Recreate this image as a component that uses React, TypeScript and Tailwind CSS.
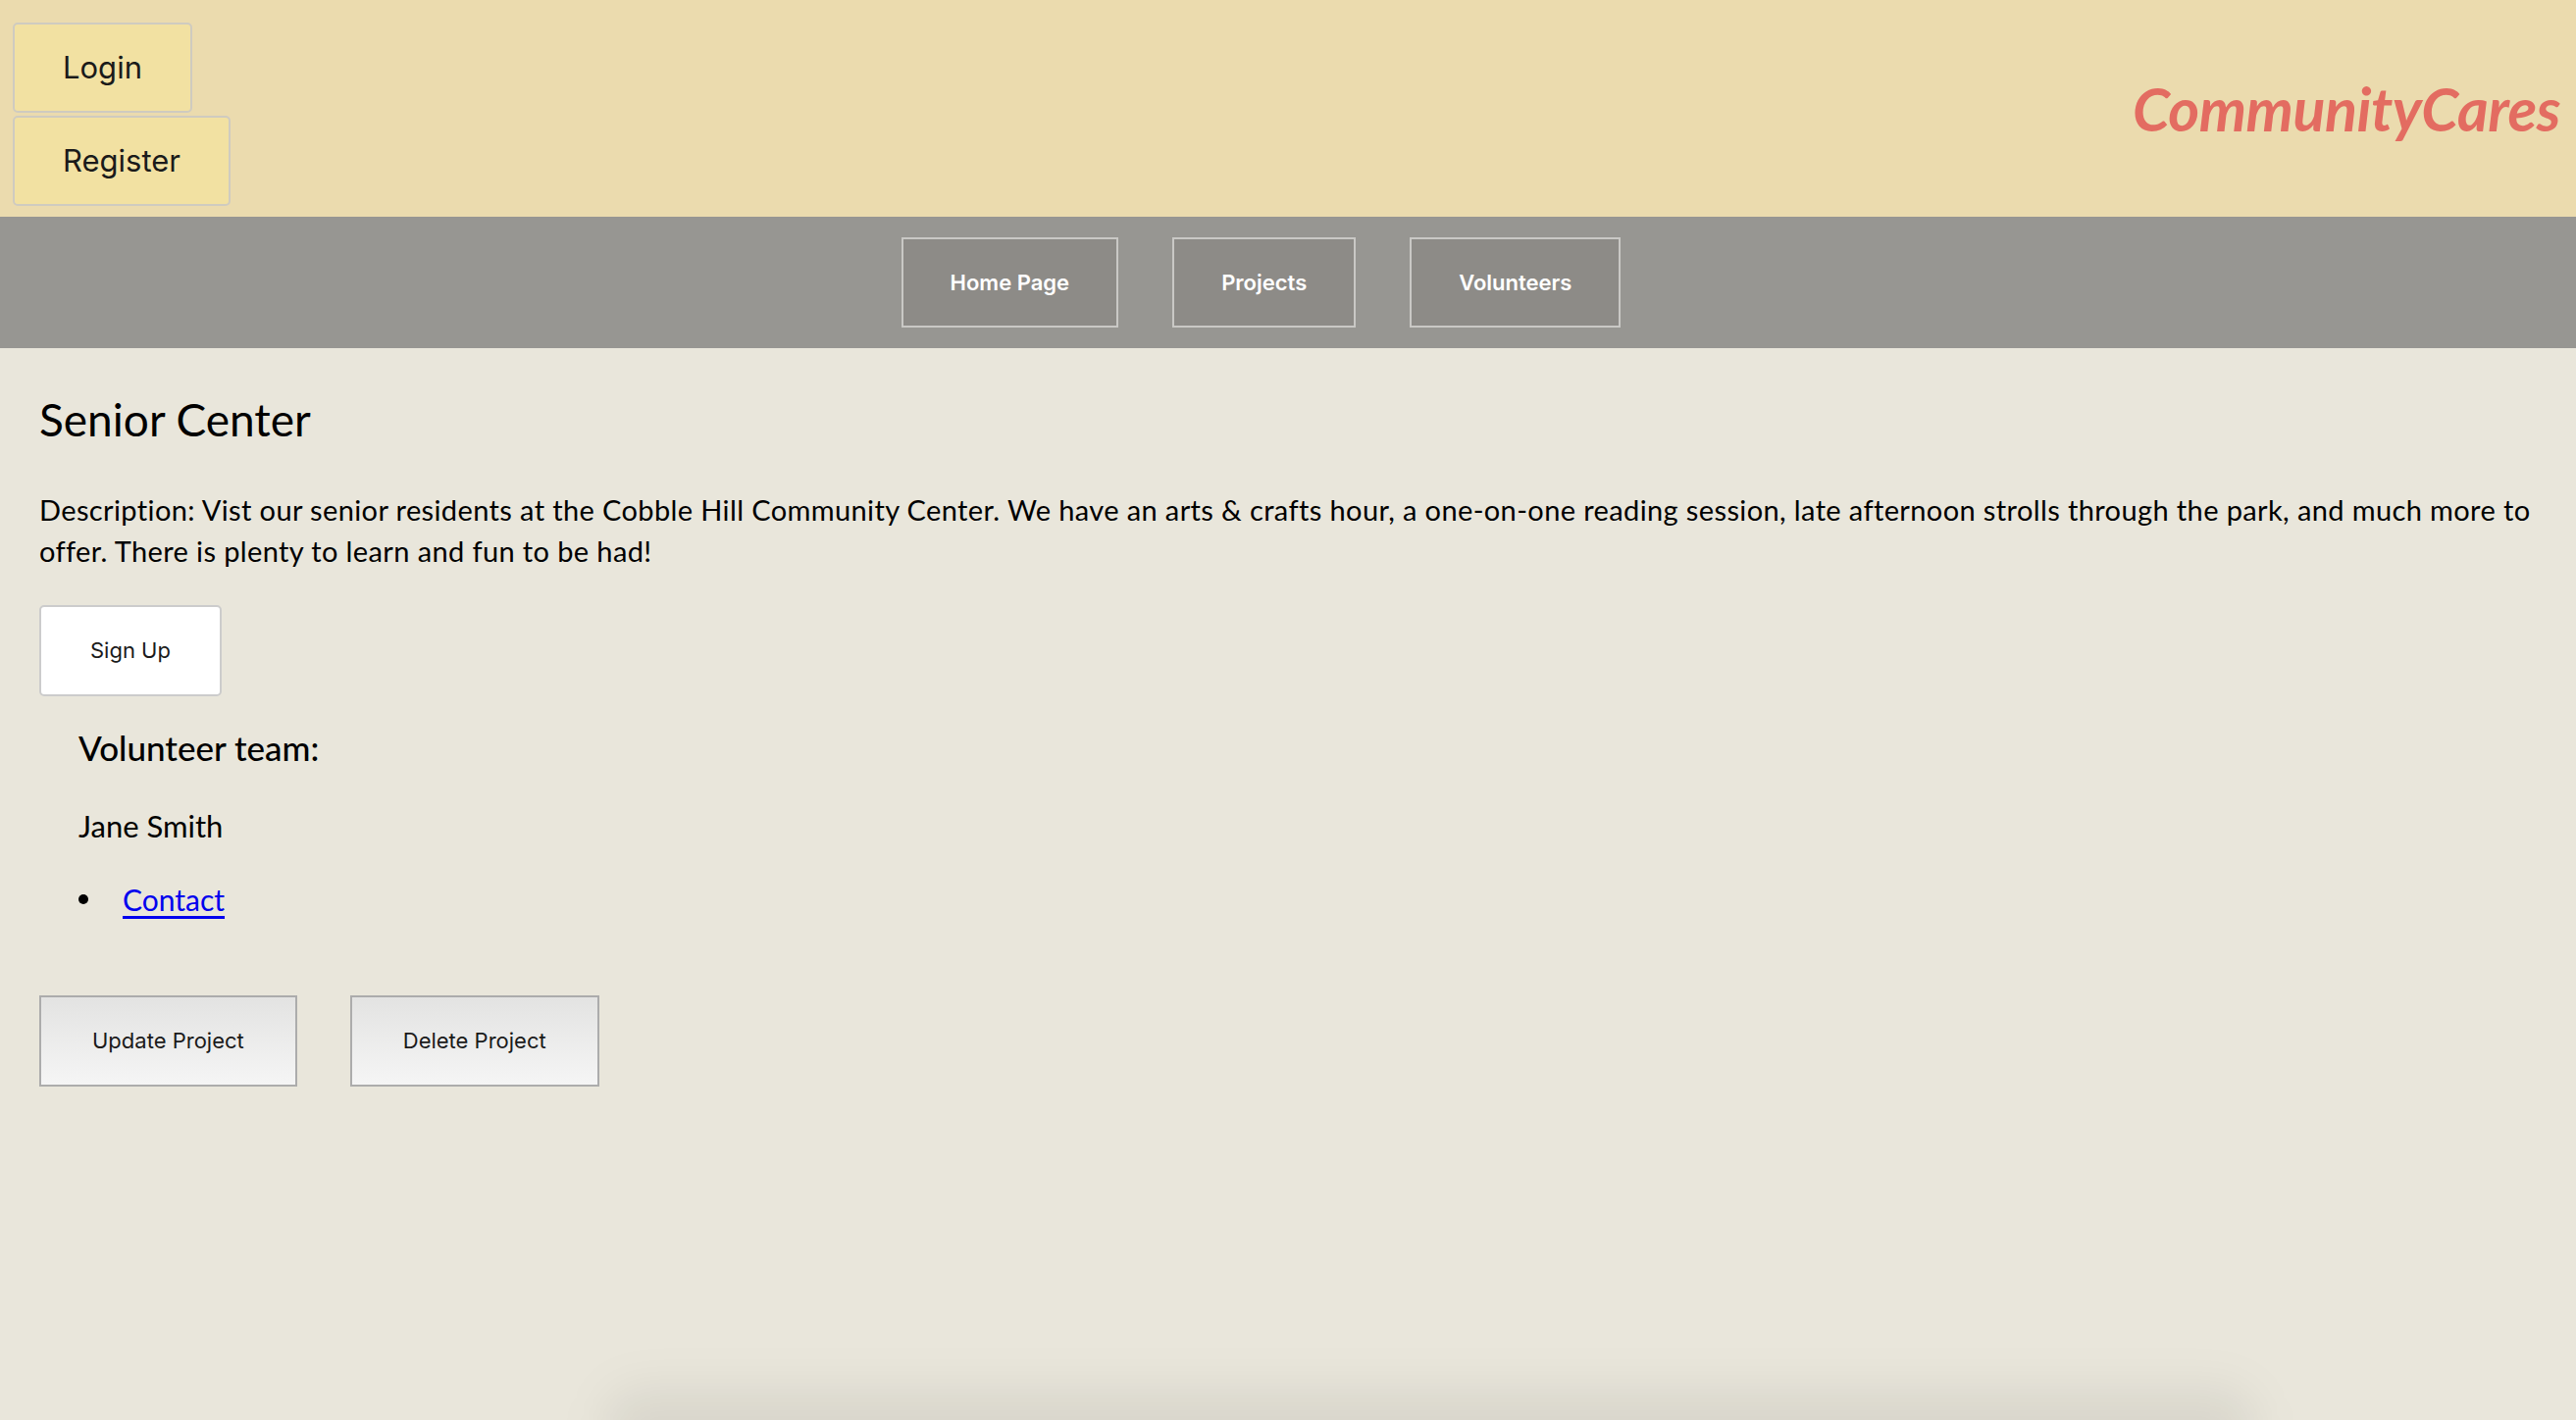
import React from 'react';

const sans = "font-['Inter','Liberation_Sans',sans-serif]";
const body = "font-['Lato','Open_Sans',sans-serif]";

const App: React.FC = () => {
  const navLinks = ['Home Page', 'Projects', 'Volunteers'];

  return (
    <div className={`relative min-h-screen overflow-hidden bg-[#e9e6db] text-black ${body}`}>
      {/* Top bar */}
      <header className="flex h-[221px] items-start justify-between bg-[#ebdbae]">
        <div className="flex flex-col items-start gap-[3px] pl-[13px] pt-[23px]">
          <button className={`h-[92px] rounded-[5px] border-2 border-[#cfcbc0] bg-[#f2e1a2] px-[49px] text-[31px] text-[#1a1a1a] ${sans}`}>
            Login
          </button>
          <button className={`h-[92px] rounded-[5px] border-2 border-[#cfcbc0] bg-[#f2e1a2] px-[49px] text-[31px] text-[#1a1a1a] ${sans}`}>
            Register
          </button>
        </div>
        <div className="pr-[16px] pt-[80px] text-[61px] font-bold italic leading-none tracking-[-0.5px] text-[#e36c61]">
          CommunityCares
        </div>
      </header>

      {/* Nav */}
      <nav className="flex h-[134px] items-center justify-center bg-[#979692]">
        {navLinks.map((link) => (
          <button
            key={link}
            className={`mr-[55px] h-[92px] border-2 border-[#c9c8c5] bg-[#8d8b87] px-[48px] text-[22px] font-semibold text-white ${sans}`}
          >
            {link}
          </button>
        ))}
      </nav>

      {/* Project details */}
      <main className="px-[40px]">
        <h1 className="mt-[50px] text-[46px] leading-none">Senior Center</h1>
        <p className="mt-[48px] text-[29px] leading-[42px] tracking-[0.38px]">
          Description: Vist our senior residents at the Cobble Hill Community Center. We have an arts &amp; crafts hour, a
          one-on-one reading session, late afternoon strolls through the park, and much more to offer. There is plenty to
          learn and fun to be had!
        </p>
        <button className={`mt-[34px] h-[93px] rounded-[5px] border-2 border-[#cccccc] bg-white px-[50px] text-[22px] text-[#1a1a1a] ${sans}`}>
          Sign Up
        </button>

        <div className="pl-[40px]">
          <h3 className="mt-[35px] text-[35px] font-medium leading-none">Volunteer team:</h3>
          <p className="mt-[47px] text-[31px] leading-none">Jane Smith</p>
          <ul className="mt-[44px]">
            <li className="flex items-center text-[30px] leading-none">
              <span className="mr-[35px] h-[10px] w-[10px] rounded-full bg-black" />
              <a href="#" className="text-[#0000ee] underline underline-offset-[5px]">
                Contact
              </a>
            </li>
          </ul>
        </div>

        <div className="mt-[83px] flex gap-[54px]">
          {['Update Project', 'Delete Project'].map((label) => (
            <button
              key={label}
              className={`h-[93px] border-2 border-[#acacac] bg-gradient-to-b from-[#e3e3e2] to-[#f5f5f5] px-[52px] text-[22px] text-[#1a1a1a] ${sans}`}
            >
              {label}
            </button>
          ))}
        </div>
      </main>

      {/* Dock shadow along the bottom edge */}
      <div className="pointer-events-none absolute bottom-[-50px] left-[620px] right-[330px] h-[80px] rounded-[30px] bg-black/[0.07] blur-xl" />
    </div>
  );
};

export default App;
